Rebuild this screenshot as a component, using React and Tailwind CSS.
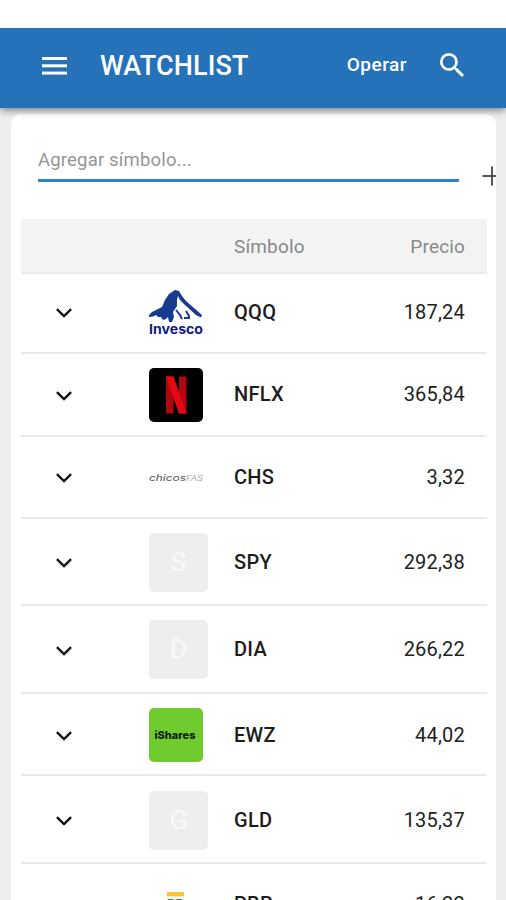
const rows = [
  { symbol: 'QQQ', price: '187,24', logo: 'invesco', height: 'h-[80px] pb-0.5' },
  { symbol: 'NFLX', price: '365,84', logo: 'netflix', height: 'h-[83px]' },
  { symbol: 'CHS', price: '3,32', logo: 'chicos', height: 'h-[82px]' },
  { symbol: 'SPY', price: '292,38', logo: null, height: 'h-[87px] pt-px' },
  { symbol: 'DIA', price: '266,22', logo: null, height: 'h-[88px] pt-px' },
  { symbol: 'EWZ', price: '44,02', logo: 'ishares', height: 'h-[82px] pt-0.5' },
  { symbol: 'GLD', price: '135,37', logo: null, height: 'h-[88px] pt-0.5' },
  { symbol: 'PBR', price: '16,22', logo: 'petrobras', height: 'h-[82px]' },
];

function InvescoLogo() {
  return (
    <svg width="54" height="48" viewBox="0 -2 54 48">
      <path
        d="M0 25 L3 22 L9 19 L13 17 L16 10 L20 4 L26 0 L30 1 L33 6 L37 11 L53 25 L52 27.5 L47 25 L36 15 L31 10 L29 6 L28 10 L28 16 L24 22 L25 27 L23 32 L20 32 L19 27 L17 29 L14 30 L12 27 L9 27 L7 25 L4 26.5 L0 27 Z"
        fill="#183a91"
      />
      <path d="M27 20 L31 25 L33 29 M35 28 L40 28 L40 26 L37 21" fill="none" stroke="#183a91" strokeWidth="2" />
      <text x="0" y="44" textLength="54" lengthAdjust="spacingAndGlyphs" fontFamily="Inter, sans-serif" fontWeight="700" fontSize="13" fill="#131a80">
        Invesco
      </text>
    </svg>
  );
}

function NetflixLogo() {
  return (
    <svg width="54" height="54" viewBox="0 0 54 54">
      <rect width="54" height="54" rx="5" fill="#000" />
      <rect x="17" y="8.5" width="7.5" height="37" fill="#b1060f" />
      <rect x="30" y="8.5" width="7.5" height="37" fill="#b1060f" />
      <path d="M17 8.5 H24.5 L37.5 45.5 H30 Z" fill="#e50914" />
    </svg>
  );
}

function ChicosLogo() {
  return (
    <svg width="54" height="12" viewBox="0 0 54 12">
      <text x="0" y="9.5" textLength="37" lengthAdjust="spacingAndGlyphs" fontFamily="Inter, sans-serif" fontStyle="italic" fontSize="8.5" fill="#555">
        chicos
      </text>
      <text x="37" y="9.5" textLength="17" lengthAdjust="spacingAndGlyphs" fontFamily="Inter, sans-serif" fontStyle="italic" fontSize="7" fill="#aaa">
        FAS
      </text>
    </svg>
  );
}

function PetrobrasLogo() {
  return (
    <svg width="54" height="54" viewBox="0 0 54 54">
      <rect x="18" y="15" width="17" height="4.5" fill="#fdc235" />
      <text x="18" y="31" textLength="17" lengthAdjust="spacingAndGlyphs" fontFamily="Roboto, sans-serif" fontWeight="900" fontSize="13" fill="#16936c">
        BR
      </text>
    </svg>
  );
}

function Logo({ name, symbol }) {
  if (name === 'invesco') return <InvescoLogo />;
  if (name === 'netflix') return <NetflixLogo />;
  if (name === 'chicos') return <ChicosLogo />;
  if (name === 'petrobras') return <PetrobrasLogo />;
  if (name === 'ishares') {
    return (
      <div className="flex h-[54px] w-[54px] items-center justify-center rounded-[5px] bg-[#70cb2e] pr-0.5 font-['Inter',sans-serif] text-[11px] font-extrabold text-[#10230a]">
        iShares
      </div>
    );
  }
  // No logo available, fall back to the initial
  return (
    <div className="flex h-[59px] w-[59px] items-center justify-center rounded-[5px] bg-[#eeeeee] text-[26px] text-[#f9f9f9]">
      {symbol[0]}
    </div>
  );
}

function Row({ row }) {
  return (
    <div className={`flex shrink-0 items-center border-b-2 border-[#e9e9e9] pr-[22px] ${row.height}`}>
      <div className="flex w-[128px] shrink-0 pt-0.5 pl-[35px]">
        <svg width="16" height="10" viewBox="0 0 16 10" fill="none" stroke="#111" strokeWidth="2.3">
          <path d="M0.9 1.1 L8 8.1 L15.1 1.1" />
        </svg>
      </div>
      <div className="w-[85px] shrink-0">
        <Logo name={row.logo} symbol={row.symbol} />
      </div>
      <span className="mb-px flex-1 text-[20px] font-medium tracking-[0.3px] text-[#1c1c1c]">{row.symbol}</span>
      <span className="mb-px text-[20px] tracking-[0.2px] text-[#222]">{row.price}</span>
    </div>
  );
}

export default function App() {
  return (
    <div className="flex h-[900px] w-[506px] flex-col overflow-hidden bg-[#eeeeee] font-['Roboto',sans-serif]">
      <div className="z-20 h-[28px] shrink-0 bg-white" />
      <header className="z-10 flex h-20 shrink-0 items-center bg-[#2672b9] pr-[42px] pb-1.5 pl-[42px] text-white shadow-[0_2px_8px_rgba(0,0,0,0.5)]">
        <svg width="25" height="18" viewBox="0 0 25 18" fill="#fff" className="mt-px">
          <rect width="25" height="3" />
          <rect y="7.3" width="25" height="3" />
          <rect y="14.6" width="25" height="3" />
        </svg>
        <h1 className="mt-0.5 ml-[33px] text-[27px] font-medium tracking-[0.15px]">WATCHLIST</h1>
        <button className="ml-auto text-[19px] font-medium tracking-[0.5px]">Operar</button>
        <svg width="24" height="24" viewBox="3 3 17.5 17.5" fill="#fff" className="ml-[33px]">
          <path d="M15.5 14h-.79l-.28-.27A6.471 6.471 0 0 0 16 9.5 6.5 6.5 0 1 0 9.5 16c1.61 0 3.09-.59 4.23-1.57l.27.28v.79l5 4.99L20.49 19l-4.99-5zm-6 0C7.01 14 5 11.99 5 9.5S7.01 5 9.5 5 14 7.01 14 9.5 11.99 14 9.5 14z" />
        </svg>
      </header>

      <main className="mt-1.5 mr-[10px] ml-[11px] flex min-h-0 flex-1 flex-col overflow-hidden rounded-t-[10px] bg-white pr-[9px] pl-[10px]">
        <div className="-mr-[9px] flex h-[105px] shrink-0 pl-[17px]">
          <div className="mt-[26px] h-[42px] w-[421px] shrink-0 border-b-[3px] border-[#2b82d0] pt-2">
            <input
              type="text"
              placeholder="Agregar símbolo..."
              className="block w-full text-[18.5px] leading-6 tracking-[0.18px] outline-none placeholder:text-[#959595]"
            />
          </div>
          <svg width="20" height="20" viewBox="0 0 20 20" stroke="#555" strokeWidth="2" className="mt-[52px] ml-[23px] shrink-0">
            <path d="M10 0.5V19.5M0.5 10H19.5" />
          </svg>
        </div>

        <div className="flex h-[55px] shrink-0 items-center border-b-2 border-[#eaeaea] bg-[#f3f3f3] pt-[3px] pr-[22px] pl-[213px] text-[19px] tracking-[0.15px] text-[#888]">
          <span className="flex-1">Símbolo</span>
          <span>Precio</span>
        </div>
        {rows.map((row) => (
          <Row key={row.symbol} row={row} />
        ))}
      </main>
    </div>
  );
}
